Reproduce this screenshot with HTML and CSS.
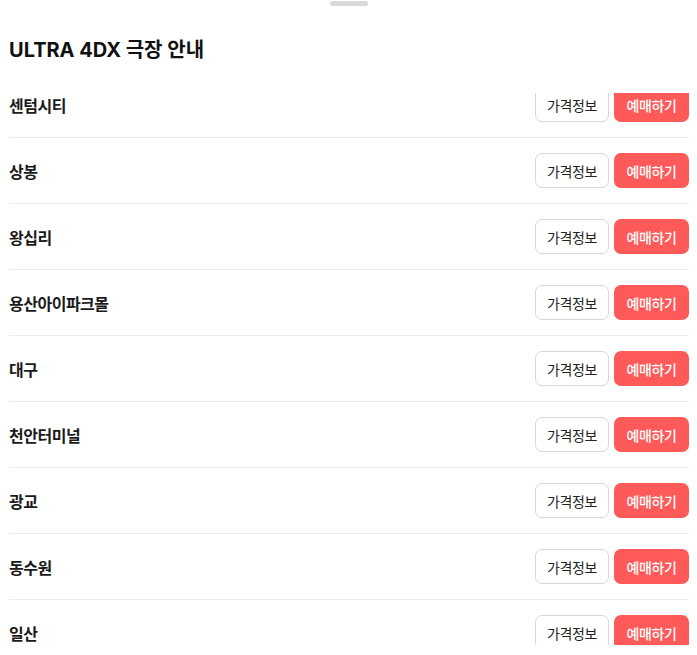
FILE: index.html
```html
<!DOCTYPE html>
<html lang="ko">
<head>
<meta charset="utf-8">
<link rel="stylesheet" href="styles.css">
</head>
<body>
<div class="sheet">
  <div class="handle"></div>
  <h1 class="title">ULTRA 4DX 극장 안내</h1>
  <div class="scroller">
    <ul class="list">
      <li class="row"><span class="name">센텀시티</span><div class="actions"><button class="btn btn-info">가격정보</button><button class="btn btn-book">예매하기</button></div></li>
      <li class="row"><span class="name">상봉</span><div class="actions"><button class="btn btn-info">가격정보</button><button class="btn btn-book">예매하기</button></div></li>
      <li class="row"><span class="name">왕십리</span><div class="actions"><button class="btn btn-info">가격정보</button><button class="btn btn-book">예매하기</button></div></li>
      <li class="row"><span class="name">용산아이파크몰</span><div class="actions"><button class="btn btn-info">가격정보</button><button class="btn btn-book">예매하기</button></div></li>
      <li class="row"><span class="name">대구</span><div class="actions"><button class="btn btn-info">가격정보</button><button class="btn btn-book">예매하기</button></div></li>
      <li class="row"><span class="name">천안터미널</span><div class="actions"><button class="btn btn-info">가격정보</button><button class="btn btn-book">예매하기</button></div></li>
      <li class="row"><span class="name">광교</span><div class="actions"><button class="btn btn-info">가격정보</button><button class="btn btn-book">예매하기</button></div></li>
      <li class="row"><span class="name">동수원</span><div class="actions"><button class="btn btn-info">가격정보</button><button class="btn btn-book">예매하기</button></div></li>
      <li class="row"><span class="name">일산</span><div class="actions"><button class="btn btn-info">가격정보</button><button class="btn btn-book">예매하기</button></div></li>
    </ul>
  </div>
</div>
</body>
</html>
```
FILE: styles.css
```css
* { box-sizing: border-box; }
html, body {
  margin: 0;
  padding: 0;
  background: #fff;
  font-family: "Inter", "Noto Sans CJK KR", sans-serif;
  color: #111;
}
.sheet {
  width: 697px;
  height: 655px;
  padding: 0 8px 0 9px;
  display: flex;
  flex-direction: column;
  overflow: hidden;
}
.handle {
  width: 38px;
  height: 5px;
  border-radius: 3px;
  background: #d9d9d9;
  margin: 1px auto 0;
  flex: none;
}
.title {
  margin: 32px 0 0;
  font-size: 20px;
  line-height: 24px;
  font-weight: 700;
  color: #111;
  flex: none;
}
.scroller {
  margin-top: 31px;
  height: 552px;
  overflow: hidden;
  flex: none;
}
.list {
  list-style: none;
  margin: -21px 0 0;
  padding: 0;
}
.row {
  display: flex;
  align-items: center;
  justify-content: space-between;
  height: 66px;
  padding: 15px 0;
  border-bottom: 1px solid #ececec;
}
.name {
  font-family: "Noto Sans CJK KR", sans-serif;
  font-size: 16px;
  font-weight: 700;
  letter-spacing: -0.5px;
  color: #1a1a1a;
}
.actions {
  display: flex;
  gap: 5px;
}
.btn {
  height: 35px;
  border-radius: 7px;
  font-family: "Noto Sans CJK KR", sans-serif;
  font-size: 14px;
  letter-spacing: -0.4px;
  padding: 0;
  cursor: pointer;
}
.btn-info {
  width: 74px;
  background: #fff;
  border: 1px solid #d8d8d8;
  color: #222;
  font-weight: 400;
}
.btn-book {
  width: 75px;
  background: #ff5a5a;
  border: none;
  color: #fff;
  font-weight: 500;
}
```
